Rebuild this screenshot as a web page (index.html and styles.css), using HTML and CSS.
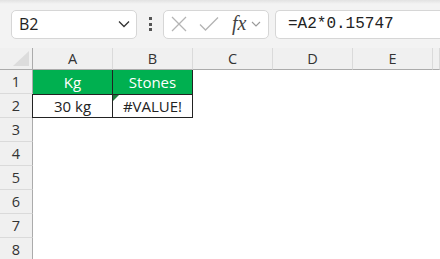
FILE: index.html
```html
<!DOCTYPE html>
<html>
<head>
<meta charset="utf-8">
<link rel="stylesheet" href="styles.css">
</head>
<body>
<div class="toolbar">
  <div class="namebox">
    <span class="name">B2</span>
    <svg class="chev" width="12" height="8" viewBox="0 0 12 8"><path d="M1 1.5 L6 6.5 L11 1.5" fill="none" stroke="#333" stroke-width="1.3"/></svg>
  </div>
  <div class="dots"><i></i><i></i><i></i></div>
  <div class="fxbox">
    <svg class="ico" width="16" height="16" viewBox="0 0 16 16"><path d="M1 1 L15 15 M15 1 L1 15" stroke="#b4b4b4" stroke-width="1.3" fill="none"/></svg>
    <svg class="ico" width="20" height="16" viewBox="0 0 20 16"><path d="M1 8.5 L6.5 14 L19 1.5" stroke="#b4b4b4" stroke-width="1.3" fill="none"/></svg>
    <span class="fx">fx</span>
    <svg class="smallchev" width="10" height="6" viewBox="0 0 10 6"><path d="M1 1 L5 5 L9 1" fill="none" stroke="#999" stroke-width="1.1"/></svg>
  </div>
  <div class="formula">=A2*0.15747</div>
</div>
<div class="sheet">
  <div class="corner"><span class="tri"></span></div>
  <div class="colh">A</div><div class="colh">B</div><div class="colh">C</div><div class="colh">D</div><div class="colh">E</div><div class="colh"></div>

  <div class="rowh">1</div>
  <div class="cell hdr a1">Kg</div><div class="cell hdr b1">Stones</div><div class="cell"></div><div class="cell"></div><div class="cell"></div><div class="cell"></div>

  <div class="rowh">2</div>
  <div class="cell val a2">30 kg</div><div class="cell val b2"><span class="err"></span>#VALUE!</div><div class="cell"></div><div class="cell"></div><div class="cell"></div><div class="cell"></div>

  <div class="rowh">3</div><div class="cell"></div><div class="cell"></div><div class="cell"></div><div class="cell"></div><div class="cell"></div><div class="cell"></div>
  <div class="rowh">4</div><div class="cell"></div><div class="cell"></div><div class="cell"></div><div class="cell"></div><div class="cell"></div><div class="cell"></div>
  <div class="rowh">5</div><div class="cell"></div><div class="cell"></div><div class="cell"></div><div class="cell"></div><div class="cell"></div><div class="cell"></div>
  <div class="rowh">6</div><div class="cell"></div><div class="cell"></div><div class="cell"></div><div class="cell"></div><div class="cell"></div><div class="cell"></div>
  <div class="rowh">7</div><div class="cell"></div><div class="cell"></div><div class="cell"></div><div class="cell"></div><div class="cell"></div><div class="cell"></div>
  <div class="rowh">8</div><div class="cell"></div><div class="cell"></div><div class="cell"></div><div class="cell"></div><div class="cell"></div><div class="cell"></div>
</div>
</body>
</html>
```

FILE: styles.css
```css
html, body {
  margin: 0;
  padding: 0;
  background: #fff;
  overflow: hidden;
  font-family: "Liberation Sans", Arial, sans-serif;
  color: #222;
}

.toolbar {
  height: 48px;
  display: flex;
  align-items: center;
  padding-left: 11px;
  box-sizing: border-box;
  background: linear-gradient(#e2e2e2 0, #f3f3f3 4px, #f3f3f3 100%);
  white-space: nowrap;
}

.namebox {
  width: 126px;
  height: 29px;
  box-sizing: border-box;
  background: #fff;
  border: 1px solid #d6d6d6;
  border-radius: 5px;
  display: flex;
  align-items: center;
  justify-content: space-between;
  padding: 0 6px 0 7px;
  flex: none;
}

.name {
  font-family: "Open Sans", sans-serif;
  font-size: 16px;
  color: #222;
}

.dots {
  width: 26px;
  height: 29px;
  display: flex;
  flex-direction: column;
  align-items: center;
  justify-content: center;
  gap: 2.5px;
  flex: none;
}

.dots i {
  display: block;
  width: 3px;
  height: 3px;
  background: #555;
}

.fxbox {
  width: 106px;
  height: 29px;
  box-sizing: border-box;
  background: #fff;
  border: 1px solid #d6d6d6;
  border-radius: 5px;
  display: flex;
  align-items: center;
  padding-left: 7px;
  flex: none;
}

.fxbox .ico:first-child { margin-right: 12px; }

.fx {
  font-family: "Liberation Serif", serif;
  font-style: italic;
  font-size: 20px;
  color: #444;
  margin-left: 13px;
  margin-right: 5px;
  line-height: 1;
  position: relative;
  top: -1px;
}

.formula {
  margin-left: 6px;
  flex: 1;
  min-width: 0;
  height: 29px;
  box-sizing: border-box;
  background: #fff;
  border: 1px solid #d6d6d6;
  border-right: none;
  border-radius: 5px 0 0 5px;
  font-family: "Liberation Mono", monospace;
  font-size: 16px;
  line-height: 27px;
  padding-left: 12px;
  color: #222;
}

.sheet {
  display: grid;
  grid-template-columns: 33px repeat(5, 80px) 7px;
  grid-template-rows: 22px repeat(8, 24px);
  background: #fff;
  overflow: hidden;
}

.corner {
  background: #f0f0f0;
  border-right: 1px solid #ababab;
  border-bottom: 1px solid #ababab;
  position: relative;
}

.tri {
  position: absolute;
  right: 3px;
  bottom: 3px;
  width: 0;
  height: 0;
  border-left: 16px solid transparent;
  border-bottom: 15px solid #dcdcdc;
}

.colh {
  background: #f0f0f0;
  border-right: 1px solid #dadada;
  border-bottom: 1px solid #ababab;
  display: flex;
  align-items: center;
  justify-content: center;
  font-family: "Open Sans", sans-serif;
  font-size: 14.5px;
  color: #333;
}

.rowh {
  background: #f0f0f0;
  border-right: 1px solid #ababab;
  border-bottom: 1px solid #dadada;
  display: flex;
  align-items: center;
  justify-content: center;
  font-family: "Open Sans", sans-serif;
  font-size: 14.5px;
  color: #333;
}

.cell {
  box-sizing: border-box;
  display: flex;
  align-items: center;
  justify-content: center;
  font-family: "Open Sans", sans-serif;
  font-size: 15px;
  position: relative;
}

.hdr {
  background: #00b050;
  color: #fff;
}

.a1 { border-right: 1px solid #222; }
.a2 { border-right: 1px solid #222; border-bottom: 1px solid #222; border-top: 1px solid #222; border-left: 1px solid #222; margin-left: -1px; }
.b1 { border-right: 1px solid #222; }
.b2 { border-right: 1px solid #222; border-bottom: 1px solid #222; border-top: 1px solid #222; color: #222; }

.val { color: #222; }

.err {
  position: absolute;
  left: 0;
  top: 0;
  width: 0;
  height: 0;
  border-top: 6px solid #1e7b3e;
  border-right: 6px solid transparent;
}
```
